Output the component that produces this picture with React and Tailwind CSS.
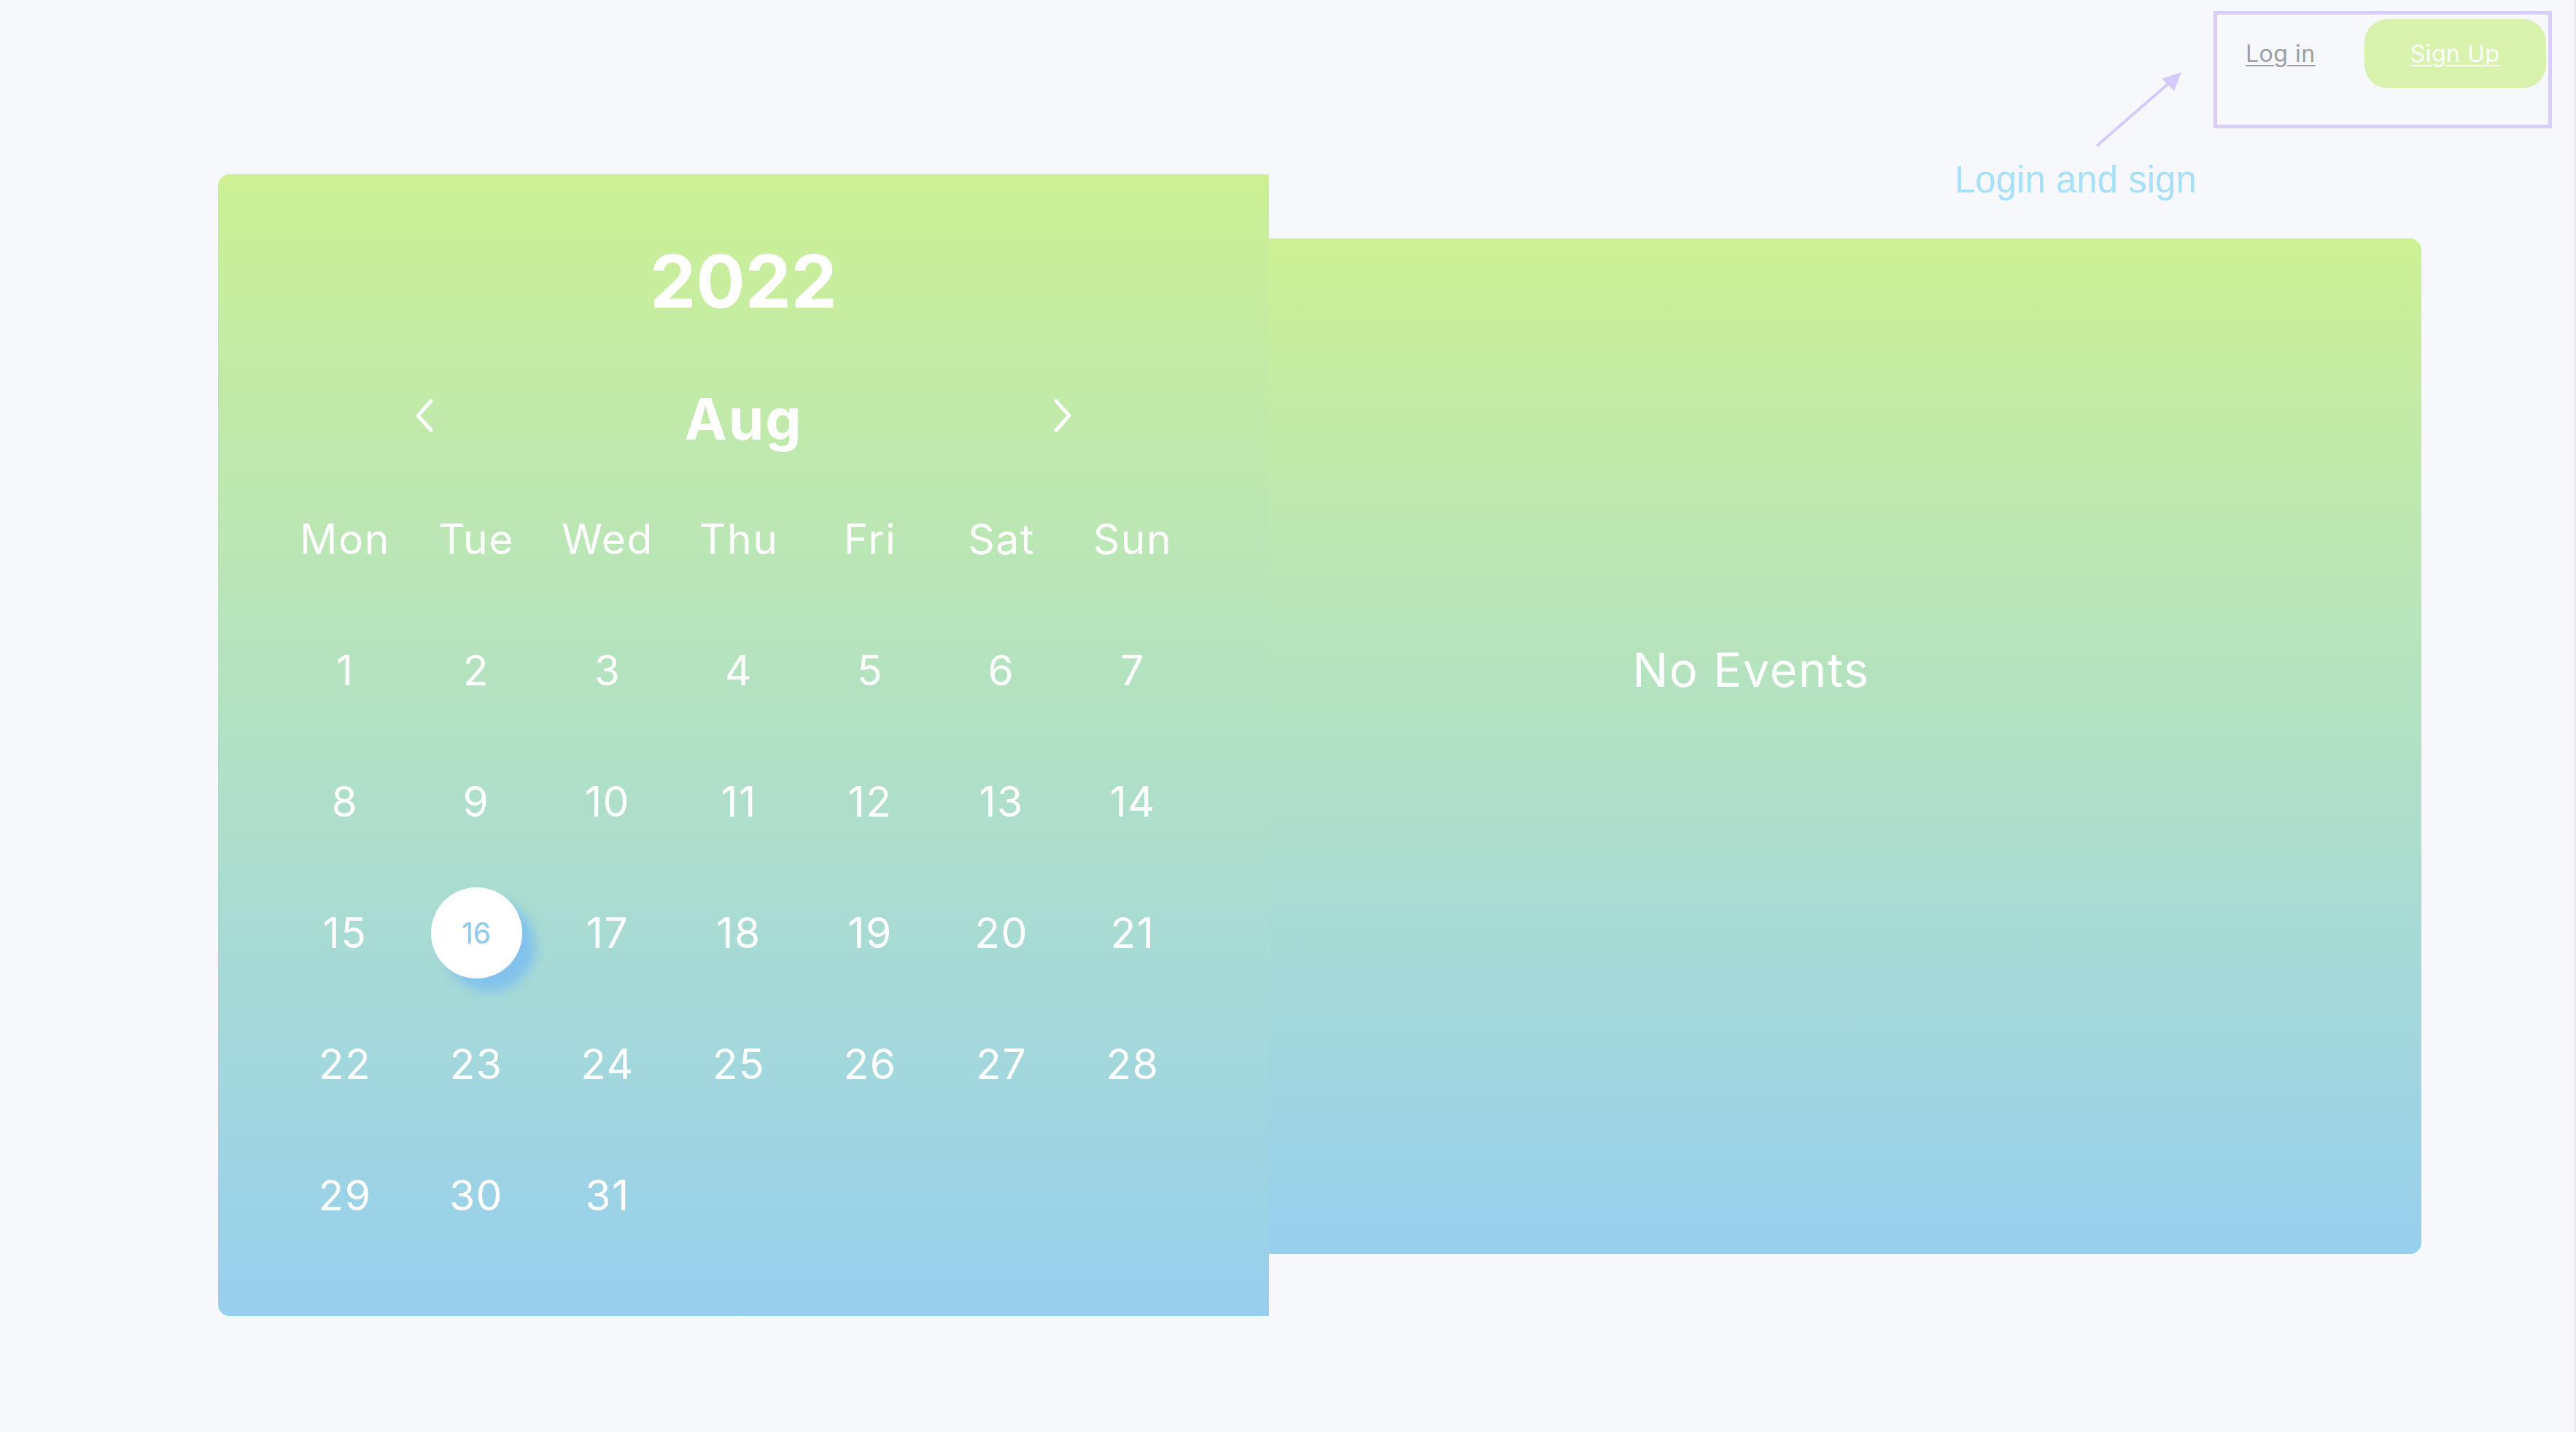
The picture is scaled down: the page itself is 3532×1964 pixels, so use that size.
import React, { useState } from 'react';

const days = ['Mon', 'Tue', 'Wed', 'Thu', 'Fri', 'Sat', 'Sun'];

// August 2022 starts on a Monday
const cells = Array.from({ length: 31 }, (_, i) => i + 1);

function Chevron({ dir }) {
  return (
    <svg width="27" height="46" viewBox="0 0 27 46" fill="none">
      {dir === 'left' ? (
        <polyline points="23,3 5,23 23,43" stroke="white" strokeWidth="5" strokeLinecap="round" strokeLinejoin="round" />
      ) : (
        <polyline points="4,3 22,23 4,43" stroke="white" strokeWidth="5" strokeLinecap="round" strokeLinejoin="round" />
      )}
    </svg>
  );
}

export default function App() {
  const [selected, setSelected] = useState(16);

  return (
    <div
      className="relative min-h-screen w-full bg-[#f6f8fc] border-r-[3px] border-[#e9e9ec]"
      style={{ fontFamily: 'Inter, "Noto Sans", sans-serif' }}
    >
      {/* Header: login / sign up */}
      <div className="flex justify-end pt-[15px] pr-[30px]">
        <div className="w-[464px] h-[161px] border-[5px] border-[#d9cdfb] flex items-start pt-[6px] pl-[39px]">
          <div className="flex items-center gap-[67px]">
            <a href="#" className="text-[32px] leading-none tracking-[0.5px] text-[#9e9e9e] underline underline-offset-[4px] decoration-[2px]">
              Log in
            </a>
            <button className="w-[249px] h-[95px] rounded-[32px] bg-[#d9f2ad] text-white text-[32px] leading-none tracking-[0.5px] underline underline-offset-[4px] decoration-[2px]">
              Sign Up
            </button>
          </div>
        </div>
      </div>

      {/* Annotation */}
      <svg className="absolute left-[2860px] top-[90px]" width="140" height="120" viewBox="0 0 140 120">
        <line x1="15" y1="110" x2="122" y2="17" stroke="#d6cafb" strokeWidth="4" />
        <polygon points="131,9 104,18 121,35" fill="#d6cafb" />
      </svg>
      <div
        className="absolute left-[2680px] top-[221px] text-[51px] leading-none text-[#a8e0f8]"
        style={{ fontFamily: '"Liberation Sans", Arial, sans-serif' }}
      >
        Login and sign
      </div>

      {/* Main */}
      <div className="flex items-start mt-[63px] pl-[299px]">
        {/* Calendar */}
        <div className="relative z-10 w-[1441px] h-[1566px] rounded-l-[16px] bg-gradient-to-b from-[#cdf093] to-[#97cfee] text-white">
          <div className="mt-[97px] h-[100px] flex items-center justify-center text-[100px] font-bold leading-none">
            2022
          </div>
          <div className="mt-[89px] h-[100px] mx-auto w-[903px] flex items-center justify-between">
            <button className="relative -top-[5px]"><Chevron dir="left" /></button>
            <span className="text-[78px] font-bold leading-none tracking-[2px]">Aug</span>
            <button className="relative -top-[5px]"><Chevron dir="right" /></button>
          </div>
          <div className="ml-[84px] w-[1260px] grid grid-cols-7 mt-[24px]">
            {days.map((d) => (
              <div key={d} className="h-[180px] flex items-center justify-center text-[57px] leading-none tracking-[1.5px]">
                {d}
              </div>
            ))}
            {cells.map((n) => (
              <div key={n} className="h-[180px] flex items-center justify-center">
                {n === selected ? (
                  <div className="w-[125px] h-[125px] rounded-full bg-white shadow-[18px_18px_16px_#82c2ec] flex items-center justify-center text-[39px] leading-none text-[#8dc8e8]">
                    {n}
                  </div>
                ) : (
                  <button onClick={() => setSelected(n)} className="text-[57px] leading-none tracking-[1.5px] text-white">
                    {n}
                  </button>
                )}
              </div>
            ))}
          </div>
        </div>

        {/* Events panel */}
        <div className="mt-[88px] w-[1580px] h-[1393px] rounded-r-[16px] bg-gradient-to-b from-[#cdf093] to-[#97cfee]">
          <div className="pt-[559px] w-[1322px] text-center text-[65px] leading-none tracking-[1.5px] text-white">
            No Events
          </div>
        </div>
      </div>
    </div>
  );
}
